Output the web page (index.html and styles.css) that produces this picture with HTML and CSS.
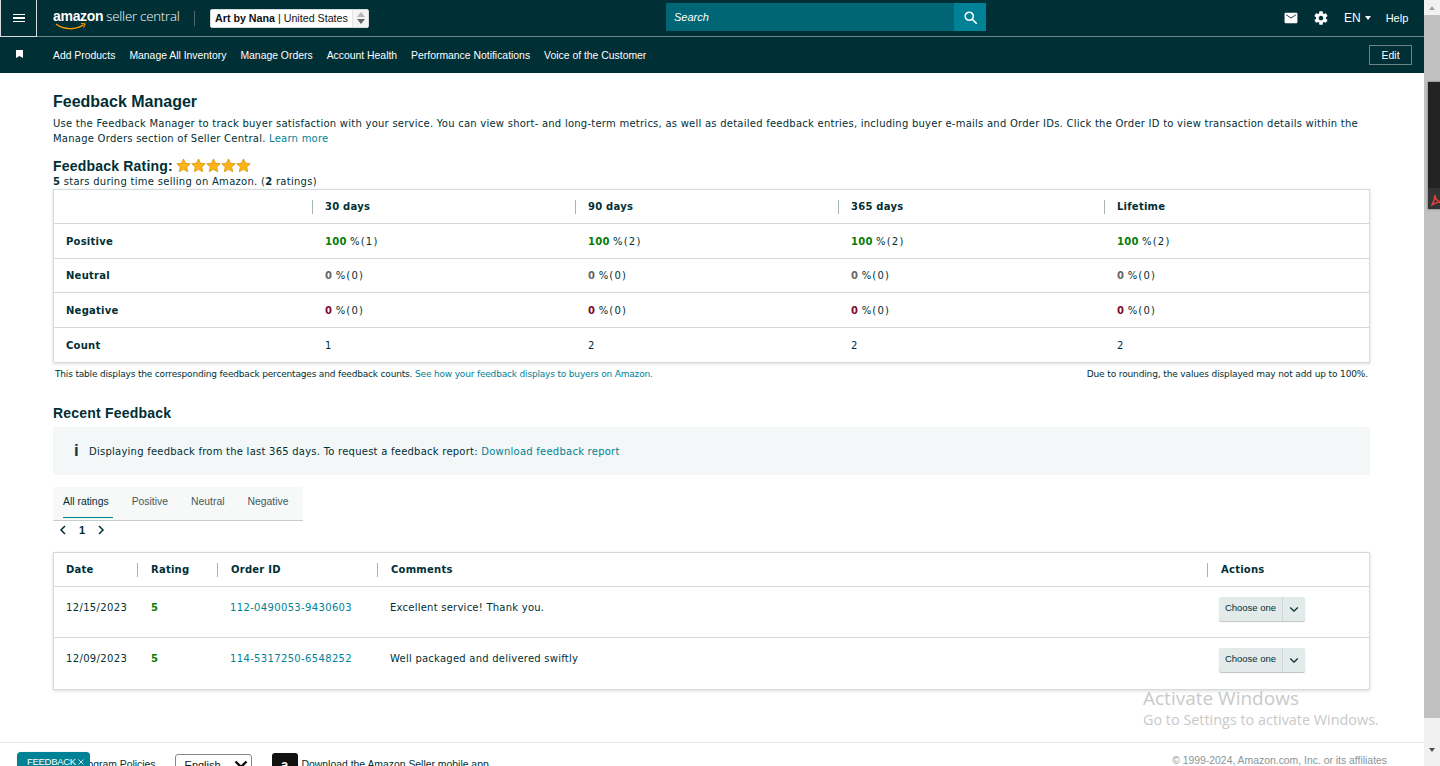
FILE: index.html
```html
<!DOCTYPE html>
<html lang="en">
<head>
    <meta charset="UTF-8">
    <title>Feedback Manager</title>
    <link rel="stylesheet" href="styles.css">
</head>
<body>
    <svg class="defs" width="0" height="0">
        <symbol id="star" viewBox="0 0 24 24">
            <path d="M12 1.500l3.200 7 7.500.8-5.600 5.100 1.600 7.500-6.700-3.800-6.700 3.800 1.600-7.500-5.600-5.100 7.500-.8z" fill="#fdb515" stroke="#d98c00" stroke-width="1.200"/>
        </symbol>
        <symbol id="chev" viewBox="0 0 12 8">
            <path d="M1.500 1.500L6 6l4.500-4.500" fill="none" stroke="#002f36" stroke-width="1.600"/>
        </symbol>
    </svg>

    <div class="page">
        <div class="header">
            <div class="topbar">
                <div class="menu-btn"><span></span><span></span><span></span></div>
                <div class="logo">
                    <span class="logo-amazon">amazon</span>
                    <span class="logo-seller">seller central</span>
                    <svg class="logo-smile" width="32" height="8" viewBox="0 0 32 8">
                        <path d="M1 1c8 6 20 6 27 1" fill="none" stroke="#ff9900" stroke-width="1.500"/>
                        <path d="M26 .5l4 .5-1.500 3.500" fill="none" stroke="#ff9900" stroke-width="1.200"/>
                    </svg>
                </div>
                <div class="logo-sep"></div>
                <div class="account-select">
                    <span><b>Art by Nana</b> | United States</span>
                    <span class="spinner"><i class="up"></i><i class="down"></i></span>
                </div>
                <div class="search">
                    <div class="search-input">Search</div>
                    <div class="search-btn">
                        <svg width="15" height="15" viewBox="0 0 24 24"><circle cx="10" cy="10" r="6.500" fill="none" stroke="#fff" stroke-width="2.400"/><path d="M14.500 14.500L22 22" stroke="#fff" stroke-width="2.600"/></svg>
                    </div>
                </div>
                <div class="top-right">
                    <svg width="14" height="12" viewBox="0 0 16 14"><path d="M1.500 1h13c.6 0 1 .4 1 1v10c0 .6-.4 1-1 1h-13c-.6 0-1-.4-1-1V2c0-.6.4-1 1-1zM2 3.500l6 4 6-4v-1l-6 4-6-4z" fill="#fff" fill-rule="evenodd"/></svg>
                    <svg class="gear" width="16" height="16" viewBox="0 0 24 24"><path fill="#fff" d="M19.430 12.980c.04-.32.07-.64.07-.98s-.03-.66-.07-.98l2.110-1.650c.19-.15.24-.42.12-.64l-2-3.460c-.12-.22-.39-.3-.61-.22l-2.490 1c-.52-.4-1.080-.73-1.690-.98l-.38-2.650C14.460 2.180 14.250 2 14 2h-4c-.25 0-.46.18-.49.42l-.38 2.650c-.61.25-1.170.59-1.690.98l-2.490-1c-.23-.09-.49 0-.61.22l-2 3.460c-.13.22-.07.49.12.64l2.110 1.650c-.04.32-.07.65-.07.98s.03.66.07.98l-2.110 1.650c-.19.15-.24.42-.12.64l2 3.460c.12.22.39.3.61.22l2.490-1c.52.4 1.080.73 1.690.98l.38 2.650c.03.24.24.42.49.42h4c.25 0 .46-.18.49-.42l.38-2.650c.61-.25 1.170-.59 1.690-.98l2.490 1c.23.09.49 0 .61-.22l2-3.460c.12-.22.07-.49-.12-.64l-2.110-1.650zM12 15.500c-1.930 0-3.500-1.570-3.500-3.500s1.570-3.500 3.500-3.500 3.500 1.570 3.500 3.500-1.570 3.500-3.500 3.500z"/></svg>
                    <span class="lang">EN <i class="caret"></i></span>
                    <span class="help">Help</span>
                </div>
            </div>
            <div class="navbar">
                <svg class="bookmark" width="7" height="8" viewBox="0 0 7 8"><path d="M0 0h7v8L3.500 6 0 8z" fill="#fff"/></svg>
                <a href="#">Add Products</a>
                <a href="#">Manage All Inventory</a>
                <a href="#">Manage Orders</a>
                <a href="#">Account Health</a>
                <a href="#">Performance Notifications</a>
                <a href="#">Voice of the Customer</a>
                <button class="edit-btn">Edit</button>
            </div>
        </div>

        <div class="main">
            <h1>Feedback Manager</h1>
            <p class="intro">Use the Feedback Manager to track buyer satisfaction with your service. You can view short- and long-term metrics, as well as detailed feedback entries, including buyer e-mails and Order IDs. Click the Order ID to view transaction details within the Manage Orders section of Seller Central. <a href="#">Learn more</a></p>

            <div class="rating-title">
                <h2>Feedback Rating:</h2>
                <div class="stars">
                    <svg><use href="#star"/></svg><svg><use href="#star"/></svg><svg><use href="#star"/></svg><svg><use href="#star"/></svg><svg><use href="#star"/></svg>
                </div>
            </div>
            <div class="rating-sub"><b>5</b> stars during time selling on Amazon. (<b>2</b> ratings)</div>

            <table class="box-table stats">
                <colgroup><col class="c1"><col class="c2"><col class="c3"><col class="c4"><col></colgroup>
                <tr>
                    <th></th>
                    <th><span class="th-in">30 days</span></th>
                    <th><span class="th-in">90 days</span></th>
                    <th><span class="th-in">365 days</span></th>
                    <th><span class="th-in">Lifetime</span></th>
                </tr>
                <tr>
                    <td class="row-name">Positive</td>
                    <td><b class="good">100</b> <span class="pct">%(1)</span></td>
                    <td><b class="good">100</b> <span class="pct">%(2)</span></td>
                    <td><b class="good">100</b> <span class="pct">%(2)</span></td>
                    <td><b class="good">100</b> <span class="pct">%(2)</span></td>
                </tr>
                <tr class="short-row">
                    <td class="row-name">Neutral</td>
                    <td><b class="mid">0</b> <span class="pct">%(0)</span></td>
                    <td><b class="mid">0</b> <span class="pct">%(0)</span></td>
                    <td><b class="mid">0</b> <span class="pct">%(0)</span></td>
                    <td><b class="mid">0</b> <span class="pct">%(0)</span></td>
                </tr>
                <tr>
                    <td class="row-name">Negative</td>
                    <td><b class="bad">0</b> <span class="pct">%(0)</span></td>
                    <td><b class="bad">0</b> <span class="pct">%(0)</span></td>
                    <td><b class="bad">0</b> <span class="pct">%(0)</span></td>
                    <td><b class="bad">0</b> <span class="pct">%(0)</span></td>
                </tr>
                <tr>
                    <td class="row-name">Count</td>
                    <td>1</td>
                    <td>2</td>
                    <td>2</td>
                    <td>2</td>
                </tr>
            </table>
            <div class="table-note">
                <span>This table displays the corresponding feedback percentages and feedback counts. <a href="#">See how your feedback displays to buyers on Amazon.</a></span>
                <span class="note-right">Due to rounding, the values displayed may not add up to 100%.</span>
            </div>

            <h2 class="recent-title">Recent Feedback</h2>
            <div class="info-box">
                <span class="info-i">i</span>
                <span>Displaying feedback from the last 365 days. To request a feedback report: <a href="#">Download feedback report</a></span>
            </div>

            <div class="tabs">
                <span class="tab active">All ratings</span>
                <span class="tab">Positive</span>
                <span class="tab">Neutral</span>
                <span class="tab">Negative</span>
            </div>
            <div class="pager">
                <svg width="8" height="10" viewBox="0 0 8 10"><path d="M6 1L2 5l4 4" fill="none" stroke="#002f36" stroke-width="1.500"/></svg>
                <b>1</b>
                <svg width="8" height="10" viewBox="0 0 8 10"><path d="M2 1l4 4-4 4" fill="none" stroke="#002f36" stroke-width="1.500"/></svg>
            </div>

            <table class="box-table recent">
                <colgroup><col class="d1"><col class="d2"><col class="d3"><col class="d4"><col></colgroup>
                <tr>
                    <th>Date</th>
                    <th><span class="th-in">Rating</span></th>
                    <th><span class="th-in">Order ID</span></th>
                    <th><span class="th-in">Comments</span></th>
                    <th><span class="th-in">Actions</span></th>
                </tr>
                <tr>
                    <td class="num">12/15/2023</td>
                    <td class="rate"><b class="good">5</b></td>
                    <td class="num"><a href="#">112-0490053-9430603</a></td>
                    <td>Excellent service! Thank you.</td>
                    <td><div class="choose"><span class="choose-text">Choose one</span><span class="choose-arrow"><svg width="10" height="7"><use href="#chev"/></svg></span></div></td>
                </tr>
                <tr>
                    <td class="num">12/09/2023</td>
                    <td class="rate"><b class="good">5</b></td>
                    <td class="num"><a href="#">114-5317250-6548252</a></td>
                    <td>Well packaged and delivered swiftly</td>
                    <td><div class="choose"><span class="choose-text">Choose one</span><span class="choose-arrow"><svg width="10" height="7"><use href="#chev"/></svg></span></div></td>
                </tr>
            </table>
        </div>

        <div class="footer">
            <div class="footer-left">
                <span class="policies">Program Policies</span>
                <div class="lang-select"><span>English</span><svg width="14" height="9" viewBox="0 0 14 9"><path d="M1.500 1.500L7 7l5.500-5.500" fill="none" stroke="#111" stroke-width="2.400"/></svg></div>
                <div class="app-icon">a</div>
                <span class="app-text">Download the Amazon Seller mobile app</span>
            </div>
            <span class="copyright">© 1999-2024, Amazon.com, Inc. or its affiliates</span>
        </div>

        <div class="feedback-tab">FEEDBACK <svg width="6" height="6" viewBox="0 0 6 6"><path d="M.5.5l5 5M5.500.5l-5 5" stroke="#fff" stroke-width=".8"/></svg></div>
        <div class="watermark">
            <div class="wm-big">Activate Windows</div>
            <div class="wm-small">Go to Settings to activate Windows.</div>
        </div>
    </div>

    <div class="scrollbar">
        <div class="sb-up"></div>
        <div class="sb-thumb"></div>
        <div class="sb-down"></div>
    </div>
    <div class="side-popup">
        <svg width="10" height="12" viewBox="0 0 10 12"><path d="M1 11C3 7 4 4 4 1c0 3 2 6 6 7-3 0-6 1-9 3z" fill="none" stroke="#e8403c" stroke-width="1.500"/></svg>
    </div>
</body>
</html>
```

FILE: styles.css
```css
html, body {
    margin: 0;
    height: 766px;
    overflow: hidden;
}

body {
    display: flex;
    font-family: "DejaVu Sans", Verdana, sans-serif;
    font-size: 10px;
    color: #0f1111;
    background: #fff;
    position: relative;
}

a {
    color: #008296;
    text-decoration: none;
}

.defs {
    position: absolute;
}

.page {
    flex: 1;
    position: relative;
    height: 766px;
    overflow: hidden;
    display: flex;
    flex-direction: column;
}

/* header */
.header {
    background: #002f36;
    color: #fff;
    font-family: "Liberation Sans", Arial, sans-serif;
}

.topbar {
    height: 36px;
    display: flex;
    align-items: center;
    border-bottom: 1px solid #6f8285;
    position: relative;
}

.menu-btn {
    width: 37px;
    height: 37px;
    box-sizing: border-box;
    border-right: 1px solid #d5dbdb;
    border-bottom: 1px solid #d5dbdb;
    border-left: 1px solid #d5dbdb;
    display: flex;
    flex-direction: column;
    justify-content: center;
    align-items: center;
    gap: 2px;
    flex-shrink: 0;
    align-self: flex-start;
}

.menu-btn span {
    width: 12px;
    height: 1.500px;
    background: #fff;
}

.logo {
    position: relative;
    margin-left: 16px;
    width: 126px;
    height: 24px;
    display: flex;
    align-items: baseline;
    gap: 3px;
    white-space: nowrap;
}

.logo-amazon {
    font-size: 14px;
    font-weight: bold;
    letter-spacing: -0.300px;
    line-height: 20px;
}

.logo-seller {
    font-family: "Open Sans", sans-serif;
    font-size: 13.200px;
    font-weight: 300;
    letter-spacing: -0.200px;
    line-height: 20px;
}

.logo-smile {
    position: absolute;
    left: 2px;
    top: 17px;
}

.logo-sep {
    width: 1px;
    height: 15px;
    background: #4f6a6e;
    margin: 0 15px 0 15px;
}

.account-select {
    width: 159px;
    height: 19px;
    box-sizing: border-box;
    background: #fff;
    border: 1px solid #d5dbdb;
    border-radius: 2px;
    color: #111;
    font-size: 10.700px;
    padding-left: 4px;
    display: flex;
    align-items: center;
    justify-content: space-between;
    white-space: nowrap;
}

.account-select b {
    font-weight: bold;
}

.spinner {
    width: 15px;
    height: 17px;
    display: flex;
    flex-direction: column;
    align-items: center;
    justify-content: center;
    gap: 2px;
    background: #f4f4f4;
    border-left: 1px solid #e4e4e4;
}

.spinner i {
    width: 0;
    height: 0;
    border-left: 4px solid transparent;
    border-right: 4px solid transparent;
}

.spinner .up {
    border-bottom: 5px solid #b5b5b5;
}

.spinner .down {
    border-top: 5px solid #666;
}

.search {
    position: absolute;
    left: 666px;
    top: 3px;
    width: 320px;
    height: 28px;
    display: flex;
}

.search-input {
    flex: 1;
    background: #006574;
    font-style: italic;
    font-size: 11px;
    line-height: 28px;
    padding-left: 8px;
}

.search-btn {
    width: 32px;
    background: #008296;
    display: flex;
    align-items: center;
    justify-content: center;
}

.top-right {
    position: absolute;
    left: 1284px;
    top: 0;
    height: 35px;
    display: flex;
    align-items: center;
    font-size: 11px;
}

.gear {
    margin-left: 15px;
}

.lang {
    margin-left: 15px;
    font-size: 12px;
    display: flex;
    align-items: center;
    gap: 4px;
}

.caret {
    width: 0;
    height: 0;
    border-left: 3.500px solid transparent;
    border-right: 3.500px solid transparent;
    border-top: 4px solid #fff;
}

.help {
    margin-left: 15px;
}

.navbar {
    height: 36px;
    display: flex;
    align-items: center;
    font-size: 10.400px;
    padding-right: 12px;
}

.bookmark {
    margin: 0 30px 2px 16px;
    flex-shrink: 0;
}

.navbar a {
    color: #fff;
    margin-right: 14px;
}

.edit-btn {
    margin-left: auto;
    width: 43px;
    height: 20px;
    box-sizing: border-box;
    background: transparent;
    border: 1px solid #6f8285;
    color: #fff;
    font-family: inherit;
    font-size: 10.500px;
    padding: 0;
}

/* main */
.main {
    flex: 1;
    padding: 20px 54px 0 53px;
}

h1 {
    font-family: "Liberation Sans", Arial, sans-serif;
    font-size: 16px;
    line-height: 18px;
    margin: 0;
    color: #002f36;
}

.intro {
    margin: 5px 0 0;
    line-height: 15px;
    letter-spacing: 0.245px;
    color: #002f36;
}

.rating-title {
    display: flex;
    align-items: center;
    margin-top: 13px;
    height: 15px;
}

.rating-title h2 {
    font-family: "Liberation Sans", Arial, sans-serif;
    font-size: 14px;
    letter-spacing: 0.200px;
    margin: 0;
    color: #002f36;
    line-height: 15px;
}

.stars {
    display: flex;
    margin-left: 3px;
    margin-top: -3px;
}

.stars svg {
    width: 15px;
    height: 15px;
}

.rating-sub {
    line-height: 13px;
    letter-spacing: 0.280px;
    color: #002f36;
    margin-top: 1px;
}

.box-table {
    width: 1315px;
    margin-left: 1px;
    border-collapse: collapse;
    table-layout: fixed;
    background: #fff;
    box-shadow: 0 0 0 1px #d5dbdb, 0 1px 3px 1px rgba(0, 0, 0, 0.15);
    letter-spacing: 0.240px;
    color: #002f36;
}

.box-table th {
    text-align: left;
    padding: 0 0 0 12px;
    font-weight: bold;
}

.box-table td {
    padding: 0 0 0 12px;
    border-top: 1px solid #d5dbdb;
}

.th-in {
    display: block;
    border-left: 1px solid #a6b5b7;
    margin-left: -13px;
    padding-left: 12px;
    line-height: 14px;
}

.stats {
    margin-top: 2px;
}

.stats th {
    height: 33px;
}

.stats td {
    height: 34px;
}

.stats .short-row td {
    height: 33px;
}

.c1 {
    width: 259px;
}

.c2 {
    width: 263px;
}

.c3 {
    width: 263px;
}

.c4 {
    width: 266px;
}

.row-name {
    font-weight: bold;
}

.pct {
    letter-spacing: 1.200px;
}

.good {
    color: #067d06;
}

.mid {
    color: #666;
}

.bad {
    color: #7b0a2c;
}

.table-note {
    display: flex;
    justify-content: space-between;
    padding: 0 2px;
    margin-top: 6px;
    font-size: 9px;
    letter-spacing: -0.175px;
    line-height: 12px;
    color: #002f36;
}

.note-right {
    letter-spacing: -0.130px;
}

.recent-title {
    font-family: "Liberation Sans", Arial, sans-serif;
    font-size: 14px;
    letter-spacing: 0.200px;
    line-height: 16px;
    margin: 25px 0 0;
    color: #002f36;
}

.info-box {
    margin-top: 6px;
    height: 48px;
    background: #f3f7f7;
    display: flex;
    align-items: center;
    letter-spacing: 0.240px;
    color: #002f36;
}

.info-i {
    font-family: "Liberation Sans", Arial, sans-serif;
    font-weight: bold;
    font-size: 17px;
    width: 36px;
    text-align: right;
    margin-right: 10px;
    margin-left: -10px;
    color: #232f3e;
}

.tabs {
    width: 240px;
    height: 33px;
    margin-top: 12px;
    background: #f7f8f8;
    border-bottom: 1px solid #c4cccc;
    display: flex;
    font-family: "Liberation Sans", Arial, sans-serif;
    font-size: 10.400px;
    padding-left: 10px;
    gap: 23px;
    color: #44595c;
}

.tab {
    line-height: 29px;
    height: 31px;
    box-sizing: border-box;
}

.tab.active {
    color: #002f36;
    border-bottom: 1px solid #008296;
    padding-right: 4px;
    margin-right: -4px;
}

.pager {
    height: 18px;
    display: flex;
    align-items: center;
    gap: 12px;
    padding-left: 6px;
    font-family: "Liberation Sans", Arial, sans-serif;
    font-size: 11px;
    color: #002f36;
}

.recent {
    margin-top: 14px;
}

.recent th {
    height: 33px;
}

.recent .th-in {
    padding-left: 13px;
}

.recent td {
    height: 51px;
    vertical-align: top;
    box-sizing: border-box;
    padding-top: 14px;
    line-height: 13px;
}

.recent td.num {
    letter-spacing: 0.350px;
}

.recent td.rate {
    padding-left: 13px;
}

.d1 {
    width: 84px;
}

.d2 {
    width: 80px;
}

.d3 {
    width: 160px;
}

.d4 {
    width: 830px;
}

.choose {
    width: 86px;
    height: 24px;
    margin: -4px 0 0 -1px;
    background: #e3eaea;
    border-radius: 2px;
    box-shadow: 0 1px 1px rgba(0, 0, 0, 0.25);
    display: flex;
    align-items: stretch;
    font-family: "Liberation Sans", Arial, sans-serif;
    font-size: 9.500px;
    letter-spacing: 0;
}

.choose-text {
    flex: 1;
    text-align: center;
    line-height: 21px;
}

.choose-arrow {
    width: 22px;
    border-left: 1px solid #cdd6d6;
    display: flex;
    align-items: center;
    justify-content: center;
}

/* footer */
.footer {
    position: absolute;
    left: 0;
    right: 0;
    top: 742px;
    height: 24px;
    border-top: 1px solid #e7e7e7;
    font-family: "Liberation Sans", Arial, sans-serif;
    font-size: 10.400px;
    display: flex;
    justify-content: space-between;
    overflow: hidden;
    background: #fff;
}

.footer-left {
    display: flex;
    align-items: flex-start;
    padding: 10px 0 0 77px;
}

.policies {
    padding-top: 6px;
    color: #002f36;
}

.lang-select {
    width: 77px;
    height: 24px;
    box-sizing: border-box;
    margin: 1px 0 0 19px;
    border: 1px solid #888;
    border-radius: 3px;
    padding: 4px 3px 0 9px;
    display: flex;
    justify-content: space-between;
    font-size: 11px;
}

.lang-select svg {
    margin-top: 1px;
}

.app-icon {
    width: 26px;
    height: 26px;
    margin-left: 20px;
    background: #111;
    color: #fff;
    border-radius: 3px;
    font-weight: bold;
    font-size: 13px;
    text-align: center;
    line-height: 24px;
}

.app-text {
    margin-left: 4px;
    padding-top: 6px;
    color: #002f36;
}

.copyright {
    color: #8a9596;
    padding: 12px 37px 0 0;
}

.feedback-tab {
    position: absolute;
    left: 17px;
    top: 752px;
    width: 73px;
    height: 20px;
    box-sizing: border-box;
    padding-left: 10px;
    background: #008296;
    border-radius: 4px 4px 0 0;
    color: #fff;
    font-family: "Liberation Sans", Arial, sans-serif;
    font-size: 9.500px;
    letter-spacing: -0.300px;
    line-height: 19px;
    white-space: nowrap;
    box-shadow: 0 0 1px rgba(0, 0, 0, 0.3);
}

.watermark {
    position: absolute;
    left: 1143px;
    top: 685px;
    color: #c9c9c9;
    font-family: "Open Sans", sans-serif;
    white-space: nowrap;
}

.wm-big {
    font-size: 19px;
    line-height: 26px;
}

.wm-small {
    font-size: 14.400px;
    line-height: 18px;
}

/* scrollbar + side popup */
.scrollbar {
    width: 16px;
    height: 766px;
    background: #f1f1f1;
    display: flex;
    flex-direction: column;
    align-items: center;
    flex-shrink: 0;
}

.sb-up {
    height: 15px;
    width: 100%;
    position: relative;
}

.sb-up::after {
    content: "";
    position: absolute;
    left: 5px;
    top: 6px;
    border-left: 3.500px solid transparent;
    border-right: 3.500px solid transparent;
    border-bottom: 4px solid #a3a3a3;
}

.sb-thumb {
    width: 100%;
    height: 703px;
    background: #c1c1c1;
}

.sb-down {
    flex: 1;
    width: 100%;
    position: relative;
}

.sb-down::after {
    content: "";
    position: absolute;
    left: 5px;
    top: 30px;
    border-left: 3.500px solid transparent;
    border-right: 3.500px solid transparent;
    border-top: 4px solid #505050;
}

.side-popup {
    position: absolute;
    left: 1428px;
    top: 82px;
    width: 14px;
    height: 127px;
    background: linear-gradient(#232323 106px, #333 106px);
    box-shadow: 0 0 2px rgba(0, 0, 0, 0.5);
    display: flex;
    align-items: flex-end;
    padding: 0 0 3px 3px;
    box-sizing: border-box;
}
```
